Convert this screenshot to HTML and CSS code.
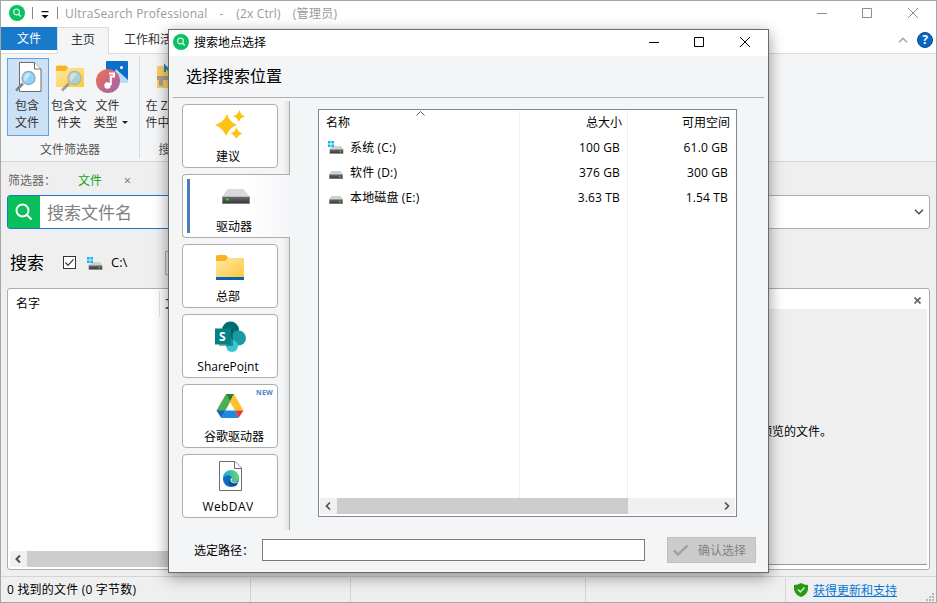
FILE: index.html
```
<!DOCTYPE html>
<html lang="zh-CN">
<head>
    <meta charset="UTF-8">
    <meta name="viewport" content="width=device-width, initial-scale=1.0">
    <title>UltraSearch Professional</title>
    <link rel="stylesheet" href="styles.css">
</head>
<body>
    <!-- Shared icons -->
    <svg class="defs" width="0" height="0">
        <defs>
            <linearGradient id="g-drive" x1="0" y1="0" x2="0" y2="1"><stop offset="0" stop-color="#6a6a6a"/><stop offset="1" stop-color="#383838"/></linearGradient>
            <linearGradient id="g-folder" x1="0" y1="0" x2="1" y2="1"><stop offset="0" stop-color="#ffe9a6"/><stop offset="1" stop-color="#ffc83d"/></linearGradient>
            <linearGradient id="g-music" x1="0" y1="0" x2="1" y2="1"><stop offset="0" stop-color="#f5704a"/><stop offset="1" stop-color="#9a63b5"/></linearGradient>
            <linearGradient id="g-edge" x1="0" y1="0" x2="1" y2="0"><stop offset="0" stop-color="#1fa6e0"/><stop offset="1" stop-color="#5fdc6a"/></linearGradient>
            <symbol id="logo" viewBox="0 0 16 16">
                <circle cx="8" cy="8" r="8" fill="#08c160"/>
                <circle cx="7.500" cy="7" r="2.900" fill="none" stroke="#d8f5e4" stroke-width="1.200"/>
                <path d="M9.600 9.200l2.200 2.300" stroke="#d8f5e4" stroke-width="1.400"/>
            </symbol>
            <symbol id="disk" viewBox="0 0 14 8">
                <path d="M2.500 0h9L14 3.500H0z" fill="#cfd0d2"/>
                <rect y="3.300" width="14" height="4.700" fill="#a4a4a4"/>
                <rect x=".6" y="3.600" width="12.800" height="3.800" fill="url(#g-drive)"/>
                <rect x="10" y="5" width="1.600" height="1.400" fill="#2be02b"/>
            </symbol>
            <symbol id="sysdisk" viewBox="0 0 16 13">
                <path d="M4 5h9l2.500 3.500H1.500z" fill="#cfd0d2"/>
                <path d="M0 0h2.600v2.600H0zM3.400 0H6v2.600H3.400zM0 3.400h2.600V6H0zM3.400 3.400H6V6H3.400z" fill="#0fb5f0"/>
                <rect x="1.500" y="8.300" width="14" height="4.500" fill="#a4a4a4"/>
                <rect x="2" y="8.600" width="13" height="3.700" fill="url(#g-drive)"/>
                <rect x="11.500" y="10" width="1.600" height="1.400" fill="#2be02b"/>
            </symbol>
            <symbol id="lens" viewBox="0 0 22 22">
                <path d="M1 20.500l7-7" stroke="#7d8489" stroke-width="2.600"/>
                <circle cx="13.500" cy="8" r="6.600" fill="#8fd0fb" stroke="#9aa7b0" stroke-width="1.200"/>
                <path d="M9 9a5 5 0 0 1 7-5.500L10 12z" fill="#c4e7fd"/>
            </symbol>
        </defs>
    </svg>

    <div class="window">
        <div class="titlebar">
            <svg class="app-logo" width="16" height="16"><use href="#logo"/></svg>
            <span class="bar"></span>
            <svg class="quick" width="8" height="8" viewBox="0 0 8 8"><path d="M.5 0h7v1.300h-7zM.5 4h7L4 7.500z" fill="#111"/></svg>
            <span class="bar"></span>
            <span class="app-title">UltraSearch Professional</span>
            <span class="app-dash">-</span>
            <span class="app-ctrl">(2x Ctrl)</span>
            <span class="app-admin">(管理员)</span>
            <svg class="win-buttons" width="102" height="12" viewBox="0 0 102 12" fill="none" stroke="#8c8c8c"><path d="M0 6.500h10M45.500 1.500h9v9h-9zM91 1l10 10M101 1L91 11"/></svg>
        </div>

        <div class="tabs">
            <div class="tab tab-file">文件</div>
            <div class="tab tab-home">主页</div>
            <div class="tab tab-work">工作和活动</div>
            <div class="tabs-fill"></div>
            <svg class="collapse" width="10" height="6" viewBox="0 0 10 6" fill="none" stroke="#a0a0a0" stroke-width="1.400"><path d="M1 5.200l4-4 4 4"/></svg>
            <div class="help">?</div>
        </div>

        <div class="ribbon">
            <div class="group group-filter">
                <div class="tools">
                    <div class="tool active">
                        <svg width="32" height="34" viewBox="0 0 32 34">
                            <path d="M7.500 1.500h15l6.500 6.500v22.500H7.500z" fill="#fff" stroke="#6b6b6b"/>
                            <path d="M22.500 1.500V8H29" fill="#fff" stroke="#6b6b6b"/>
                            <use href="#lens" x="3" y="9" width="22" height="22"/>
                        </svg>
                        <span>包含<br>文件</span>
                    </div>
                    <div class="tool">
                        <svg width="32" height="34" viewBox="0 0 32 34">
                            <path d="M2 6q0-1.500 1.500-1.500H12l3 3.500-3 4H2z" fill="#f8b420"/>
                            <path d="M2 10h9l3-3h16v19H2z" fill="url(#g-folder)"/>
                            <use href="#lens" x="7" y="9" width="22" height="22" opacity=".75"/>
                        </svg>
                        <span>包含文<br>件夹</span>
                    </div>
                    <div class="tool types">
                        <svg width="32" height="34" viewBox="0 0 32 34">
                            <rect x="10" width="22" height="22" rx="1" fill="#0a6fc9"/>
                            <path d="M20 8l12 11v3H14z" fill="#b9daf5"/>
                            <circle cx="25.500" cy="6.500" r="1.500" fill="#fff"/>
                            <circle cx="12" cy="20" r="12" fill="url(#g-music)"/>
                            <path d="M13 12.500h5v3h-3.200V24" fill="none" stroke="#fff" stroke-width="2"/>
                            <circle cx="11.500" cy="24.500" r="3.200" fill="#fff"/>
                        </svg>
                        <span><em>文件</em><br>类型<i class="caret"></i></span>
                    </div>
                </div>
                <div class="group-name">文件筛选器</div>
            </div>
            <div class="group group-search">
                <div class="tools">
                    <div class="tool wide">
                        <svg width="32" height="34" viewBox="0 0 32 34">
                            <path d="M2 5h26v22H2z" fill="#f9cd62"/>
                            <path d="M2 15h26v4H2z" fill="#a9a08a"/>
                            <path d="M4 19h4v6H4z" fill="#a9a08a"/>
                            <path d="M10 11V5l5 6V5" fill="none" stroke="#1d86b8" stroke-width="2"/>
                        </svg>
                        <span>在 ZIP 文<br>件中搜索</span>
                    </div>
                </div>
                <div class="group-name">搜索</div>
            </div>
        </div>

        <div class="filters">
            <span class="filters-label">筛选器：</span>
            <span class="filter-tag">文件</span>
            <span class="filter-close">×</span>
        </div>

        <div class="search">
            <div class="search-input">
                <div class="search-icon">
                    <svg width="18" height="18" viewBox="0 0 18 18" fill="none" stroke="#fff" stroke-width="2"><circle cx="7.500" cy="7.500" r="6"/><path d="M12 12l4.500 4.500"/></svg>
                </div>
                <span>搜索文件名</span>
            </div>
            <div class="search-combo">
                <svg width="10" height="6" viewBox="0 0 10 6" fill="none" stroke="#444" stroke-width="1.300"><path d="M1 .8l4 4 4-4"/></svg>
            </div>
        </div>

        <div class="targets">
            <span class="targets-label">搜索</span>
            <svg class="check" width="13" height="13" viewBox="0 0 13 13" fill="none" stroke="#333"><rect x=".5" y=".5" width="12" height="12" fill="#fff"/><path d="M2.500 6.500L5 9.300l5.500-6" stroke-width="1.200"/></svg>
            <svg class="target-disk" width="16" height="13"><use href="#sysdisk"/></svg>
            <span class="target-name">C:\</span>
            <span class="target-more"></span>
        </div>

        <div class="panes">
            <div class="results">
                <div class="results-head"><span class="col-name">名字</span><span class="col-next">文件夹</span></div>
                <div class="scrollbar">
                    <svg width="17" height="16" viewBox="0 0 17 16" fill="none" stroke="#505050" stroke-width="2"><path d="M10 4.500L6.500 8l3.500 3.500"/></svg>
                    <div class="thumb"></div>
                </div>
            </div>
            <div class="preview">
                <div class="preview-head"><svg width="7" height="7" viewBox="0 0 7 7" stroke="#666" stroke-width="1.700"><path d="M.5.5l6 6M6.500.5l-6 6"/></svg></div>
                <div class="preview-body">选择要预览的文件。</div>
            </div>
        </div>

        <div class="statusbar">
            <div class="status status-found">0 找到的文件 (0 字节数)</div>
            <div class="status status-small"></div>
            <div class="status status-mid"></div>
            <div class="status status-fill"></div>
            <div class="support">
                <svg width="14" height="14" viewBox="0 0 14 14"><path d="M7 0q3 2 7 2v4.500Q13 12 7 14 1 12 0 6.500V2q4 0 7-2z" fill="#279a12"/><path d="M4 6.500L6.300 9 10.500 4.500" fill="none" stroke="#d8f0d0" stroke-width="1.400"/></svg>
                <a href="#">获得更新和支持</a>
            </div>
            <svg class="grip" width="9" height="9" viewBox="0 0 9 9" fill="#b4b4b4"><path d="M6 0h2v2H6zM3 3h2v2H3zM6 3h2v2H6zM0 6h2v2H0zM3 6h2v2H3zM6 6h2v2H6z"/></svg>
        </div>
    </div>

    <!-- Location dialog -->
    <div class="dialog">
        <div class="dialog-title">
            <svg width="16" height="16"><use href="#logo"/></svg>
            <span>搜索地点选择</span>
            <svg class="win-buttons" width="102" height="12" viewBox="0 0 102 12" fill="none" stroke="#000"><path d="M0 6.500h10M45.500 1.500h9v9h-9zM91 1l10 10M101 1L91 11"/></svg>
        </div>
        <h1>选择搜索位置</h1>
        <div class="dialog-body">
            <div class="places">
                <div class="place">
                    <svg width="32" height="32" viewBox="0 0 32 32" fill="#fdc314">
                        <path d="M13 4q2.500 8 10 11-8 3-11 11-3-8-11-11Q10 12 13 4z"/>
                        <path d="M25.500 0q1 5 5.500 6.500-4.800 1.300-6.300 5.500-1.200-4.500-5.700-5.800Q24 5 25.500 0z"/>
                        <path d="M22.500 17q1.200 5 6 6.500-4.800 1.500-6 5.500-1.500-4-6-5.500 4.800-1.500 6-6.500z"/>
                    </svg>
                    <span>建议</span>
                </div>
                <div class="place selected">
                    <svg width="32" height="32" viewBox="0 0 32 32">
                        <path d="M7.500 9h16L30 17H2z" fill="#d9dadc"/>
                        <rect x="2" y="16.500" width="28" height="7.500" fill="#a0a0a0"/>
                        <rect x="2.700" y="17" width="26.600" height="6.300" fill="url(#g-drive)"/>
                        <circle cx="7.500" cy="19.500" r="1.300" fill="#2be02b"/>
                    </svg>
                    <span>驱动器</span>
                </div>
                <div class="place">
                    <svg width="32" height="32" viewBox="0 0 32 32">
                        <path d="M2 6.500q0-1.500 1.500-1.500h8l3 3-3 5H2z" fill="#f9b41c"/>
                        <path d="M2 11h9l3-3h16v19H2z" fill="url(#g-folder)"/>
                        <rect x="2" y="27" width="28" height="3" fill="#0b63b8"/>
                    </svg>
                    <span>总部</span>
                </div>
                <div class="place">
                    <svg width="32" height="32" viewBox="0 0 32 32">
                        <circle cx="16.500" cy="10" r="8.500" fill="#036c70"/>
                        <circle cx="24.500" cy="18" r="7.500" fill="#1a9ba1"/>
                        <circle cx="18" cy="26" r="6" fill="#37c6d0"/>
                        <rect x="5" y="9" width="14" height="17" fill="#04474a" opacity=".45"/>
                        <rect x="1" y="8.500" width="16" height="16" fill="#038387"/>
                        <text x="5" y="21" class="sp-letter">S</text>
                    </svg>
                    <span>SharePo<u>i</u>nt</span>
                </div>
                <div class="place">
                    <svg width="32" height="32" viewBox="0 0 32 32">
                        <path d="M12 4L2.500 20.500 7.500 28l8.500-16z" fill="#4caf50"/>
                        <path d="M12 4h8l-4 8z" fill="#2e7d32"/>
                        <path d="M20 4l9.500 16.500h-8.500L16 12z" fill="#ffc22d"/>
                        <path d="M2.500 20.500H11L7.500 28z" fill="#1565c0"/>
                        <path d="M11 20.500h10l3.500 7.500h-17z" fill="#1e88e5"/>
                        <path d="M21 20.500h8.500L24.500 28z" fill="#e53935"/>
                    </svg>
                    <span class="google">谷歌驱动器</span>
                    <b class="new">NEW</b>
                </div>
                <div class="place">
                    <svg width="32" height="32" viewBox="0 0 32 32">
                        <path d="M5.500 1.500H21l6.500 6.500v22.500h-22z" fill="#fff" stroke="#6b6b6b"/>
                        <path d="M20.500 1.500v7h7" fill="#fff" stroke="#6b6b6b"/>
                        <circle cx="17" cy="19" r="8" fill="#0f6dbe"/>
                        <path d="M9 18a8 8 0 0 1 16 0q0 4-5 4-3 0-2.500-2 1.500-3-2-4.500Q11.500 14.500 9 18z" fill="url(#g-edge)"/>
                        <path d="M17.500 18.500q-2 4 3 4.500 2 0 4-1.200L22 26q-7 1-7.500-4 0-2.500 3-3.500z" fill="#0b4f94"/>
                        <path d="M16.500 19q1.500-1 1.800-.5-.8 1.500-.8 2.500 1 2 4.500 1.500l3-1q-2 2.500-6 1.500-3-1-2.500-4z" fill="#fff"/>
                    </svg>
                    <span class="webdav">WebDAV</span>
                </div>
            </div>

            <div class="list">
                <svg class="sort" width="9" height="5" viewBox="0 0 9 5" fill="none" stroke="#555"><path d="M.5 4.500l4-4 4 4"/></svg>
                <div class="columns">
                    <div class="column">
                        <div class="head">名称</div>
                        <div class="cell"><svg class="sys" width="16" height="13"><use href="#sysdisk"/></svg>系统 (C:)</div>
                        <div class="cell"><svg width="14" height="8"><use href="#disk"/></svg>软件 (D:)</div>
                        <div class="cell"><svg width="14" height="8"><use href="#disk"/></svg>本地磁盘 (E:)</div>
                    </div>
                    <div class="column right">
                        <div class="head">总大小</div>
                        <div class="cell">100 GB</div>
                        <div class="cell">376 GB</div>
                        <div class="cell">3.63 TB</div>
                    </div>
                    <div class="column right">
                        <div class="head">可用空间</div>
                        <div class="cell">61.0 GB</div>
                        <div class="cell">300 GB</div>
                        <div class="cell">1.54 TB</div>
                    </div>
                </div>
                <div class="scrollbar">
                    <svg width="17" height="16" viewBox="0 0 17 16" fill="none" stroke="#505050" stroke-width="1.700"><path d="M10 4.500L6.500 8l3.500 3.500"/></svg>
                    <div class="thumb"></div>
                    <svg width="17" height="16" viewBox="0 0 17 16" fill="none" stroke="#505050" stroke-width="1.700"><path d="M7 4.500L10.500 8 7 11.500"/></svg>
                </div>
            </div>
        </div>
        <div class="dialog-footer">
            <label for="path">选定路径：</label>
            <input type="text" id="path">
            <div class="confirm">
                <svg width="16" height="12" viewBox="0 0 16 12" fill="none" stroke="#a0a0a0" stroke-width="2.400"><path d="M1 6.500l4 4L14.500 1.500"/></svg>
                <span>确认选择</span>
            </div>
        </div>
    </div>
</body>
</html>
```
FILE: styles.css
```
* {
    box-sizing: border-box;
}
body {
    margin: 0;
    width: 937px;
    height: 603px;
    position: relative;
    overflow: hidden;
    font-family: "Open Sans", "Noto Sans CJK SC", sans-serif;
    font-size: 12px;
    line-height: 17px;
    color: #000;
}
svg {
    display: block;
    flex: none;
}
.defs {
    position: absolute;
}
.window {
    width: 937px;
    height: 603px;
    border: 1px solid #a6a6a6;
    background-color: #efefef;
    display: flex;
    flex-direction: column;
    white-space: nowrap;
}

/* Title bar */
.titlebar {
    height: 26px;
    flex: none;
    display: flex;
    align-items: center;
    padding: 0 17px 2px 8px;
    background-color: #fff;
    color: #9a9a9a;
}
.bar {
    width: 1px;
    height: 12px;
    background-color: #888;
}
.app-logo {
    margin-right: 7px;
}
.quick {
    margin: 3px 8px 0 8px;
}
.app-title {
    margin-left: 7px;
    letter-spacing: 0.2px;
}
.app-dash {
    margin-left: 12px;
}
.app-ctrl {
    margin-left: 13px;
    letter-spacing: 0.15px;
}
.app-admin {
    margin-left: 12px;
    letter-spacing: 0.3px;
}
.win-buttons {
    margin-left: auto;
}

/* Ribbon tabs */
.tabs {
    height: 27px;
    flex: none;
    display: flex;
    align-items: center;
    background-color: #fff;
    border-bottom: 1px solid #dadbdc;
    padding-right: 3px;
    color: #333;
}
.tab {
    height: 27px;
    line-height: 25px;
    text-align: center;
    align-self: flex-start;
}
.tab-file {
    width: 56px;
    height: 23px;
    line-height: 23px;
    background-color: #1979ca;
    color: #fff;
}
.tab-home {
    width: 52px;
    background-color: #f4f5f7;
    border: 1px solid #dadbdc;
    border-bottom: none;
    line-height: 23px;
}
.tab-work {
    padding-left: 15px;
}
.tabs-fill {
    flex: 1;
}
.collapse {
    margin-right: 9px;
}
.help {
    width: 16px;
    height: 16px;
    border-radius: 50%;
    background-color: #0a66c2;
    border: 1px solid #084c8e;
    color: #fff;
    font-weight: bold;
    line-height: 14px;
    text-align: center;
}

/* Ribbon */
.ribbon {
    height: 108px;
    flex: none;
    display: flex;
    padding-top: 2px;
    background-color: #f4f5f7;
    border-bottom: 1px solid #d6d6d6;
    color: #333;
}
.group {
    height: 102px;
    border-right: 1px solid #dadbdc;
}
.group-filter {
    width: 139px;
    padding-left: 6px;
}
.group-search {
    width: 62px;
}
.tools {
    display: flex;
    height: 85px;
    padding-top: 2px;
}
.tool {
    width: 42px;
    height: 78px;
    display: flex;
    flex-direction: column;
    align-items: center;
    border: 1px solid transparent;
    padding-top: 2px;
    text-align: center;
}
.tool span {
    margin: 2px 2px 0 0;
}
.tool em {
    margin-left: 2px;
    font-style: normal;
}
.tool.active {
    background-color: #cce0f6;
    border-color: #62a2e4;
}
.tool.types span {
    margin-right: 3px;
    text-align: left;
}
.tool.wide {
    width: 68px;
}
.tool.wide svg {
    margin-left: 1px;
}
.caret {
    display: inline-block;
    border: 3px solid transparent;
    border-top-color: #222;
    border-bottom: none;
    margin: 0 0 3px 4px;
}
.group-name {
    padding-right: 6px;
    text-align: center;
    color: #555;
}
.group-search .group-name {
    padding: 0;
}

/* Filter row */
.filters {
    height: 33px;
    flex: none;
    display: flex;
    align-items: center;
    padding: 3px 0 0 7px;
    color: #666;
}
.filter-tag {
    margin-left: 22px;
    color: #12a112;
}
.filter-close {
    margin-left: 22px;
}

/* Search box */
.search {
    height: 34px;
    flex: none;
    display: flex;
    padding: 0 6px;
}
.search-input {
    width: 560px;
    display: flex;
    align-items: center;
    border: 1px solid #1a78c8;
    border-radius: 3px 0 0 3px;
    background-color: #fff;
    font-size: 17px;
    color: #808080;
}
.search-icon {
    width: 32px;
    height: 32px;
    margin-right: 7px;
    background-color: #08bf5b;
    display: flex;
    align-items: center;
    justify-content: center;
}
.search-combo {
    flex: 1;
    display: flex;
    align-items: center;
    justify-content: flex-end;
    padding-right: 5px;
    background-color: #fff;
    border: 1px solid #adadad;
    border-radius: 0 3px 3px 0;
}

/* Searched drives */
.targets {
    height: 59px;
    flex: none;
    display: flex;
    align-items: center;
    padding: 8px 0 0 9px;
}
.targets-label {
    font-size: 17px;
    margin-right: 19px;
}
.target-disk {
    margin: 2px 8px 0 11px;
}
.target-name {
    width: 54px;
    font-size: 13px;
}
.target-more {
    width: 80px;
    height: 24px;
    border: 1px solid #adadad;
    background-color: #e6e6e6;
}

/* Results and preview */
.panes {
    height: 282px;
    flex: none;
    display: flex;
    gap: 6px;
    padding: 0 6px;
}
.results, .preview {
    border: 1px solid #adadad;
    border-radius: 3px;
    background-color: #fff;
}
.results {
    width: 615px;
    display: flex;
    flex-direction: column;
    justify-content: space-between;
    padding: 2px;
}
.results-head {
    display: flex;
    height: 26px;
    line-height: 25px;
}
.col-name {
    width: 150px;
    padding-left: 6px;
    border-right: 1px solid #e2e2e2;
}
.col-next {
    padding-left: 5px;
}
.scrollbar {
    display: flex;
    height: 16px;
    background-color: #f0f0f0;
}
.thumb {
    width: 291px;
    background-color: #cdcdcd;
}
.preview {
    flex: 1;
    padding: 0 2px 4px;
    display: flex;
    flex-direction: column;
}
.preview-head {
    height: 20px;
    display: flex;
    align-items: center;
    justify-content: flex-end;
    padding: 2px 6px 0 0;
}
.preview-body {
    flex: 1;
    display: flex;
    align-items: center;
    justify-content: center;
    padding: 0 2px 10px 0;
    background-color: #efefef;
    border-bottom: 1px solid #999;
}

/* Status bar */
.statusbar {
    margin-top: 6px;
    height: 26px;
    flex: none;
    display: flex;
    border-top: 1px solid #d4d4d4;
    padding-top: 1px;
}
.status {
    border-right: 1px solid #d4d4d4;
    line-height: 24px;
}
.status-found {
    width: 250px;
    padding-left: 6px;
    letter-spacing: 0.2px;
}
.status-small {
    width: 100px;
}
.status-mid {
    width: 235px;
}
.status-fill {
    width: 200px;
}
.support {
    display: flex;
    align-items: center;
    gap: 5px;
    padding-left: 8px;
}
.support a {
    color: #0078d7;
}
.grip {
    margin: auto 1px 0 auto;
}

/* Dialog */
.dialog {
    position: absolute;
    left: 168px;
    top: 29px;
    width: 601px;
    height: 544px;
    border: 1px solid #6a6a6a;
    background-color: #f4f5f7;
    box-shadow: 0 4px 14px rgba(0, 0, 0, 0.42);
    display: flex;
    flex-direction: column;
    white-space: nowrap;
}
.dialog-title {
    height: 26px;
    flex: none;
    display: flex;
    align-items: center;
    padding: 0 17px 2px 4px;
    gap: 5px;
    background-color: #fff;
}
h1 {
    margin: 0 4px;
    height: 42px;
    flex: none;
    padding-left: 13px;
    border-bottom: 1px solid #adb0b3;
    font-size: 16px;
    font-weight: normal;
    line-height: 41px;
}
.dialog-body {
    height: 432px;
    flex: none;
    display: flex;
    padding: 3px 31px 0 13px;
}
.places {
    width: 108px;
    height: 429px;
    display: flex;
    flex-direction: column;
    gap: 6px;
    padding-top: 3px;
    border-right: 1px solid #adadad;
    background: linear-gradient(to right, #f4f5f7 101px, #dfe1e2 107px);
}
.place {
    position: relative;
    width: 96px;
    height: 64px;
    flex: none;
    display: flex;
    flex-direction: column;
    align-items: center;
    padding-top: 5px;
    border: 1px solid #adadad;
    border-radius: 4px;
    background-color: #fff;
}
.place span {
    margin: 6px 4px 0 0;
}
.place .google {
    margin: 6px 0 0 8px;
}
.place .webdav {
    letter-spacing: 0.4px;
}
.place.selected {
    width: 108px;
    padding-right: 2px;
    border-right: none;
    border-radius: 4px 0 0 4px;
    background: linear-gradient(to right, #fff 60%, #f4f5f7);
}
.place.selected span {
    margin-right: 3px;
}
.selected::before {
    content: "";
    position: absolute;
    left: 4px;
    top: 4px;
    width: 3px;
    height: 54px;
    background-color: #4a7ebb;
}
.new {
    position: absolute;
    right: 4px;
    top: 2px;
    font-size: 7px;
    line-height: 12px;
    letter-spacing: 0.2px;
    color: #4a86c8;
}
.sp-letter {
    font-size: 12px;
    font-weight: bold;
    fill: #fff;
}

/* Drive list */
.list {
    position: relative;
    width: 419px;
    height: 408px;
    margin: 8px 0 0 28px;
    border: 1px solid #828790;
    background-color: #fff;
    padding: 1px 1px 2px;
    display: flex;
    flex-direction: column;
}
.sort {
    position: absolute;
    left: 97px;
    top: 1px;
}
.columns {
    flex: 1;
    display: grid;
    grid-template-columns: 200px 108px 107px;
}
.column {
    border-right: 1px solid #e8f0f8;
}
.column:last-child {
    border-right: none;
}
.head {
    height: 24px;
    line-height: 23px;
    padding-left: 6px;
}
.cell {
    height: 25px;
    display: flex;
    align-items: center;
    gap: 7px;
    padding-left: 9px;
    letter-spacing: 0.15px;
}
.cell svg {
    margin-top: 4px;
}
.cell .sys {
    margin: 0 -1px 0 -1px;
}
.right .head {
    text-align: right;
    padding-right: 5px;
}
.right .cell {
    justify-content: flex-end;
    padding-right: 7px;
}
.list .thumb {
    margin-right: auto;
}

/* Footer */
.dialog-footer {
    display: flex;
    align-items: center;
    height: 42px;
    padding: 0 12px 2px 25px;
}
.dialog-footer label {
    width: 68px;
}
.dialog-footer input {
    width: 383px;
    height: 22px;
    border: 1px solid #7a7a7a;
    background-color: #fff;
}
.confirm {
    width: 89px;
    height: 26px;
    margin-left: auto;
    display: flex;
    align-items: center;
    gap: 9px;
    padding-left: 5px;
    border: 1px solid #bfbfbf;
    background-color: #ccc;
    color: #838383;
}
```
